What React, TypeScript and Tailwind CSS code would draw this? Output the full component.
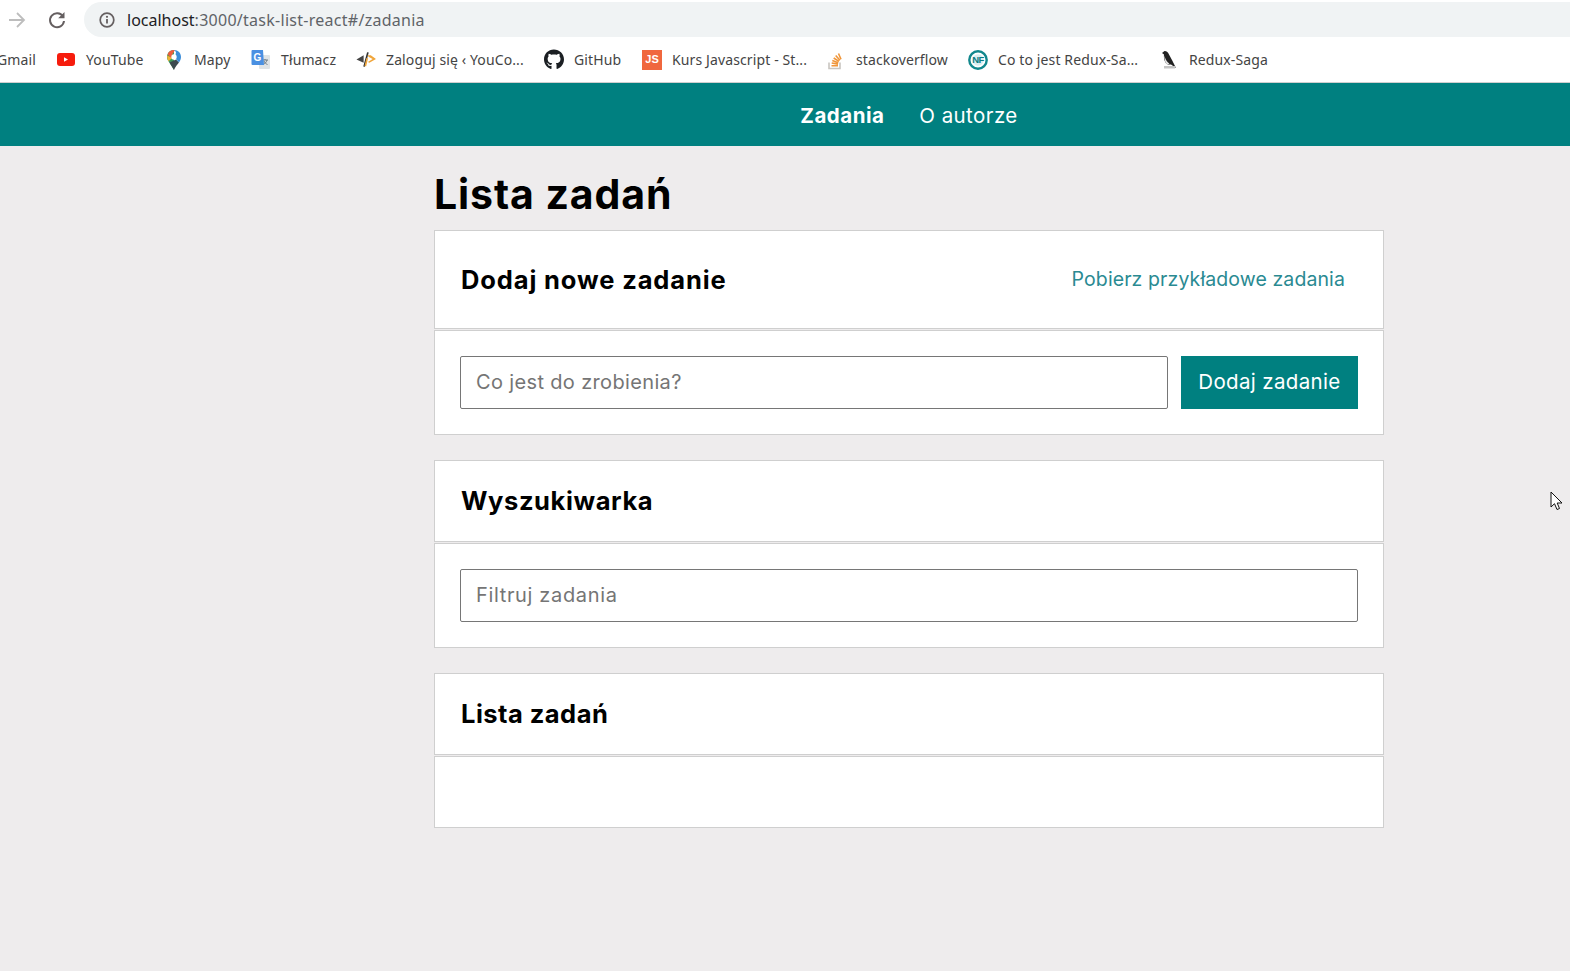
import { FaGithub } from "react-icons/fa";
import type { ReactNode } from "react";

const ui = "font-['Noto_Sans','Open_Sans',sans-serif]";
const mont = "font-['Inter','Noto_Sans',sans-serif]";

const Youtube = () => (
  <svg width="18" height="13" viewBox="0 0 18 13"><rect width="18" height="13" rx="3" fill="#f61c0d" /><path d="M7 4.200l4 2.300-4 2.300z" fill="#fff" /></svg>
);
const Maps = () => (
  <svg width="16" height="20" viewBox="0 0 16 20">
    <path d="M8 0C3.800 0 1 3 1 7c0 1.500.4 2.600 1 3.600L8 20z" fill="#3f9a5a" />
    <path d="M3.500 12.500 8 20c1-3 3.200-5 5-7.500l-3-3z" fill="#3c4a4f" />
    <path d="M8 0C5 0 2.600 1.500 1.600 4.200L5.500 9l.5-4 3-5z" fill="#ec5c3f" />
    <path d="M1.200 5.500C1 8 1.500 9.600 2.500 11.200L6 8z" fill="#f2b234" />
    <path d="M8 0c4.200 0 7 3 7 7 0 2.300-1 3.900-2 5.500L9 8l1-6z" fill="#3b8dd9" />
    <circle cx="8" cy="7" r="2.700" fill="#fff" />
  </svg>
);
const Translate = () => (
  <svg width="20" height="20" viewBox="0 0 20 20">
    <rect x="8" y="5" width="11" height="14" rx="1" fill="#dfe3e6" />
    <path d="M11.500 10h5.500M14 9v1M16 10c-.5 2-2 3.500-3.500 4.500M13 11c.5 1.500 2 3 3.500 3.500" stroke="#63707a" strokeWidth="0.900" fill="none" />
    <path d="M1.500 0h10.500l1 15H1.500a1 1 0 0 1-1-1V1a1 1 0 0 1 1-1z" fill="#4a90e2" />
    <text x="2.500" y="11" fontSize="10" fontWeight="700" fill="#fff" fontFamily="Liberation Sans, sans-serif">G</text>
  </svg>
);
const YouCode = () => (
  <svg width="21" height="15" viewBox="0 0 21 15">
    <path d="M8 3 .5 7.500 8 11z" fill="#444" />
    <path d="M12.500 0 8.500 15" stroke="#333" strokeWidth="1.800" />
    <path d="M12 3h3.500l5.500 4-7 4-1.500-1 5-3-4-2z" fill="#f0a53a" />
    <path d="M11.800 6l-2 8.500" stroke="#f0a53a" strokeWidth="1.800" />
  </svg>
);
const Js = () => (
  <div className="flex h-5 w-5 items-center justify-center bg-[#f0673e] font-['Liberation_Sans',sans-serif] text-[11px] font-bold leading-none text-white">JS</div>
);
const Stack = () => (
  <svg width="18" height="20" viewBox="0 0 18 20" fill="none">
    <path d="M2 12.500v6h11v-6" stroke="#c9c5c0" strokeWidth="1.600" />
    <path d="M4.500 15.700h6.500M4.700 13l6.400 1.100M5.300 10.500l6 2.300M6.700 8l5.300 3.400M8.700 5.500l4.200 4.700M11.500 3.500l2.500 5.700" stroke="#f0963a" strokeWidth="1.600" />
  </svg>
);
const NF = () => (
  <svg width="20" height="20" viewBox="0 0 20 20">
    <circle cx="10" cy="10" r="8.700" fill="#fff" stroke="#12888d" strokeWidth="2.400" />
    <circle cx="10" cy="10" r="5.800" fill="#d8eef0" />
    <text x="10" y="13.300" textAnchor="middle" fontSize="9.500" fontWeight="700" letterSpacing="-0.5" fill="#0d7c82" fontFamily="Liberation Sans, sans-serif">NF</text>
  </svg>
);
const Bird = () => (
  <svg width="18" height="20" viewBox="0 0 18 20">
    <path d="M2 3 4.500 1c2.500 0 3.500 1.500 4.500 3.500l3.500 6.500L16 18l-5-3.500H8C5 13.500 3.500 9 4 4.500z" fill="#222" />
    <path d="M4.500 5.500c.5 3 2 6.500 5 8.200L7 14.500C5 12.500 4 9 4.500 5.500z" fill="#e4e4e4" />
    <path d="M4 16h11v2.500H4z" fill="#c4c4c4" />
  </svg>
);

const bookmarks: { icon: ReactNode; label: string; w: string }[] = [
  { icon: <Youtube />, label: "YouTube", w: "w-[58px]" },
  { icon: <Maps />, label: "Mapy", w: "w-[37px]" },
  { icon: <Translate />, label: "Tłumacz", w: "w-[55px]" },
  { icon: <YouCode />, label: "Zaloguj się ‹ YouCo...", w: "w-[138px]" },
  { icon: <FaGithub size={21} color="#1b1f23" />, label: "GitHub", w: "w-[48px]" },
  { icon: <Js />, label: "Kurs Javascript - St...", w: "w-[134px]" },
  { icon: <Stack />, label: "stackoverflow", w: "w-[92px]" },
  { icon: <NF />, label: "Co to jest Redux-Sa...", w: "w-[141px]" },
  { icon: <Bird />, label: "Redux-Saga", w: "w-[78px]" },
];

function Chrome() {
  return (
    <div className={`${ui} h-[83px] border-b border-[#cfcfcf] bg-white`}>
      <div className="flex h-[37px] items-center pt-[2px]">
        <svg className="ml-[7px]" width="20" height="18" viewBox="0 0 20 18" fill="none" stroke="#bdbdbd" strokeWidth="1.800">
          <path d="M2 9h15M10 2l7 7-7 7" />
        </svg>
        <svg className="ml-[20px]" width="20" height="20" viewBox="0 0 20 20" fill="none">
          <path d="M16 6.500A7 7 0 1 0 17 11" stroke="#655f60" strokeWidth="2" />
          <path d="M17.500 2v6.300h-6.300z" fill="#655f60" />
        </svg>
        <div className="ml-[17px] flex h-[35px] flex-1 items-center rounded-l-[18px] bg-[#f0f3f4] pl-[15px]">
          <svg width="16" height="16" viewBox="0 0 16 16" fill="none">
            <circle cx="8" cy="8" r="6.800" stroke="#655f60" strokeWidth="1.700" />
            <path d="M8 7v4.500" stroke="#655f60" strokeWidth="1.800" />
            <circle cx="8" cy="4.800" r="1.100" fill="#655f60" />
          </svg>
          <div className="ml-[12px] text-[16px] leading-none text-[#5f6368]">
            <span className="tracking-[0px] text-[#202124]">localhost</span>
            <span className="tracking-[0.27px]">:3000/task-list-react#/zadania</span>
          </div>
        </div>
      </div>
      <div className="flex h-[45px] items-center text-[14px] tracking-[0.12px] text-[#444]">
        <span className="ml-[-3px] w-[38px] shrink-0 whitespace-nowrap">Gmail</span>
        <div className="ml-[21px] flex items-center gap-[20px]">
          {bookmarks.map((b) => (
            <div key={b.label} className="flex items-center gap-[10px]">
              <div className="flex h-5 w-5 items-center justify-center">{b.icon}</div>
              <span className={`${b.w} whitespace-nowrap`}>{b.label}</span>
            </div>
          ))}
        </div>
      </div>
    </div>
  );
}

function Panel({ title, titleClass, extra, bodyClass, children }: { title: string; titleClass: string; extra?: ReactNode; bodyClass: string; children?: ReactNode }) {
  return (
    <section className="mb-[25px] flex flex-col gap-[1px]">
      <div className={`flex items-center justify-between border border-[#cfcfcf] bg-white pl-[26px] pr-[38px] ${extra ? "h-[99px]" : "h-[82px]"}`}>
        <h2 className={`text-[25.500px] font-bold leading-none text-black ${titleClass}`}>{title}</h2>
        {extra}
      </div>
      <div className={`flex gap-[13px] border border-[#cfcfcf] bg-white px-[25px] ${bodyClass}`}>{children}</div>
    </section>
  );
}

const inputCls = "h-[53px] flex-1 rounded-[2px] border border-[#767676] bg-white px-[15px] pb-[2px] text-[20px] text-black outline-none placeholder:text-[#757575]";

export default function App() {
  return (
    <div className={`${mont} relative h-[971px] overflow-hidden bg-[#eeeced]`}>
      <Chrome />
      <nav className="flex h-[63px] items-center bg-[#008080] pt-[3px]">
        <div className="ml-[434px] flex w-[950px] items-center justify-center gap-[35px] text-[20.500px] text-white">
          <a className="font-bold tracking-[0.5px]">Zadania</a>
          <a className="tracking-[0.42px]">O autorze</a>
        </div>
      </nav>
      <main className="ml-[434px] w-[950px]">
        <h1 className="h-[84px] pt-[23px] text-[41px] font-bold leading-[50px] tracking-[0.9px] text-black">Lista zadań</h1>
        <Panel
          title="Dodaj nowe zadanie"
          titleClass="tracking-[0.87px]"
          bodyClass="h-[105px] py-[25px]"
          extra={<a className="text-[19.500px] tracking-[0.1px] text-[#2a8a92]">Pobierz przykładowe zadania</a>}
        >
          <input className={`${inputCls} tracking-[0.35px]`} placeholder="Co jest do zrobienia?" />
          <button className="h-[53px] w-[177px] bg-[#008080] text-center text-[20.500px] tracking-[0.35px] text-white">Dodaj zadanie</button>
        </Panel>
        <Panel title="Wyszukiwarka" titleClass="tracking-[0.6px]" bodyClass="h-[105px] py-[25px]">
          <input className={`${inputCls} tracking-[0.65px]`} placeholder="Filtruj zadania" />
        </Panel>
        <Panel title="Lista zadań" titleClass="tracking-[0.47px]" bodyClass="h-[72px]" />
      </main>
      <svg className="absolute left-[1550px] top-[491px]" width="13" height="21" viewBox="0 0 13 21">
        <path d="M1 1v15l3.500-3.300L7 18.500l2.500-1L7.200 12H12z" fill="#fff" stroke="#111" strokeWidth="1" />
      </svg>
    </div>
  );
}
